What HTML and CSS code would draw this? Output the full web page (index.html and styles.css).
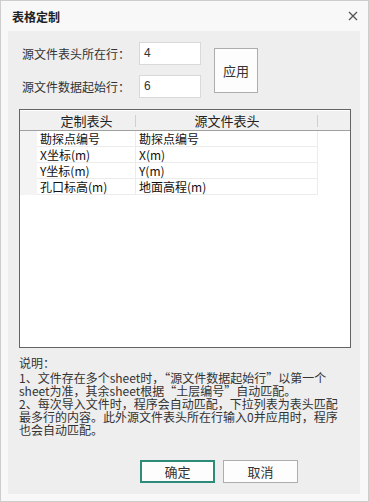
FILE: index.html
```html
<!DOCTYPE html>
<html lang="zh-CN">
<head>
  <meta charset="UTF-8">
  <title>表格定制</title>
  <link rel="stylesheet" href="styles.css">
</head>
<body>
  <div class="dialog">
    <div class="title-bar">
      <span class="title">表格定制</span>
      <svg class="close" width="10" height="10" viewBox="0 0 10 10">
        <path d="M1 1 L9 9 M9 1 L1 9" stroke="#555" stroke-width="1.3"/>
      </svg>
    </div>
    <div class="panel">
      <div class="head-form">
        <div class="fields">
          <div class="field">
            <span class="label">源文件表头所在行：</span>
            <div class="input">4</div>
          </div>
          <div class="field">
            <span class="label">源文件数据起始行：</span>
            <div class="input">6</div>
          </div>
        </div>
        <div class="apply-btn">应用</div>
      </div>

      <div class="grid">
        <div class="grid-head">
          <div class="gutter"></div>
          <div class="hcell col1">定制表头</div>
          <div class="hcell col2">源文件表头</div>
        </div>
        <div class="grid-row">
          <div class="gutter"></div>
          <div class="cell col1">勘探点编号</div>
          <div class="cell col2">勘探点编号</div>
        </div>
        <div class="grid-row">
          <div class="gutter"></div>
          <div class="cell col1">X坐标(m)</div>
          <div class="cell col2">X(m)</div>
        </div>
        <div class="grid-row">
          <div class="gutter"></div>
          <div class="cell col1">Y坐标(m)</div>
          <div class="cell col2">Y(m)</div>
        </div>
        <div class="grid-row">
          <div class="gutter"></div>
          <div class="cell col1">孔口标高(m)</div>
          <div class="cell col2">地面高程(m)</div>
        </div>
      </div>

      <div class="notes">
        <div class="notes-title">说明：</div>
        <p>1、文件存在多个sheet时，“源文件数据起始行”以第一个<br>sheet为准，其余sheet根据“土层编号”自动匹配。<br>2、每次导入文件时，程序会自动匹配，下拉列表为表头匹配<br>最多行的内容。此外源文件表头所在行输入0并应用时，程序<br>也会自动匹配。</p>
      </div>

      <div class="actions">
        <div class="btn btn-primary">确定</div>
        <div class="btn">取消</div>
      </div>
    </div>
  </div>
</body>
</html>
```

FILE: styles.css
```css
html, body {
  margin: 0;
  padding: 0;
}
body {
  font-family: "Noto Sans CJK SC", "Noto Sans", sans-serif;
  font-size: 12px;
  color: #333;
  background: #fafafa;
}
.dialog {
  width: 369px;
  height: 502px;
  box-sizing: border-box;
  border: 1px solid #cdcdcd;
  background: #f8f8f8;
  display: flex;
  flex-direction: column;
}
.title-bar {
  height: 30px;
  flex: none;
  display: flex;
  align-items: center;
  justify-content: space-between;
  padding: 0 10px 0 11px;
}
.title {
  font-weight: bold;
  font-size: 12px;
  color: #222;
}
.close {
  display: block;
}
.panel {
  flex: 1;
  margin: 0 8px 7px 7px;
  background: #eeeeee;
  display: flex;
  flex-direction: column;
  padding: 11px 9px 11px 11px;
}

/* 表头设置 */
.head-form {
  display: flex;
  align-items: center;
  padding-left: 3px;
}
.fields {
  display: flex;
  flex-direction: column;
  gap: 10px;
}
.field {
  display: flex;
  align-items: center;
}
.label {
  width: 117px;
  color: #333;
}
.input {
  width: 56px;
  height: 21px;
  line-height: 21px;
  border: 1px solid #d9d9d9;
  background: #fff;
  padding-left: 4px;
  font-family: "Liberation Sans", sans-serif;
  font-size: 12px;
  color: #333;
}
.apply-btn {
  width: 42px;
  height: 43px;
  margin-left: 13px;
  border: 1px solid #adadad;
  background: #fdfdfd;
  display: flex;
  align-items: center;
  justify-content: center;
  font-size: 13px;
  color: #333;
}

/* 表格 */
.grid {
  margin-top: 11px;
  height: 239px;
  box-sizing: border-box;
  border: 1px solid #646464;
  background: #fff;
  padding: 1px 0 0;
}
.grid-head {
  display: flex;
  height: 19px;
  background: #f0f0f0;
  border-bottom: 1px solid #a0a0a0;
}
.grid-head .gutter {
  background: #f0f0f0;
}
.gutter {
  width: 17px;
  flex: none;
  background: #f4f4f4;
}
.hcell {
  text-align: center;
  line-height: 19px;
  font-size: 13px;
  color: #222;
  position: relative;
}
.hcell:after {
  content: '';
  position: absolute;
  right: 0;
  top: 4px;
  height: 12px;
  border-right: 1px solid #d0d0d0;
}
.col1 {
  width: 99px;
  flex: none;
}
.col2 {
  width: 182px;
  flex: none;
}
.grid-row {
  display: flex;
  height: 16px;
}
.cell {
  line-height: 15px;
  height: 16px;
  box-sizing: border-box;
  padding: 0 3px;
  border-right: 1px solid #ececec;
  border-bottom: 1px solid #ececec;
  font-size: 12px;
  color: #111;
  white-space: nowrap;
}

/* 说明 */
.notes {
  margin-top: 7px;
  color: #333;
}
.notes-title {
  line-height: 16px;
}
.notes p {
  margin: 0;
  line-height: 13px;
  font-size: 12px;
  white-space: nowrap;
}

/* 按钮 */
.actions {
  margin-top: auto;
  display: flex;
  gap: 8px;
  padding-left: 121px;
}
.btn {
  width: 73px;
  height: 21px;
  border: 1px solid #adadad;
  background: #fdfdfd;
  display: flex;
  align-items: center;
  justify-content: center;
  font-size: 13px;
  color: #333;
}
.btn-primary {
  width: 71px;
  height: 19px;
  border: 2px solid #2e8b7a;
}
```
